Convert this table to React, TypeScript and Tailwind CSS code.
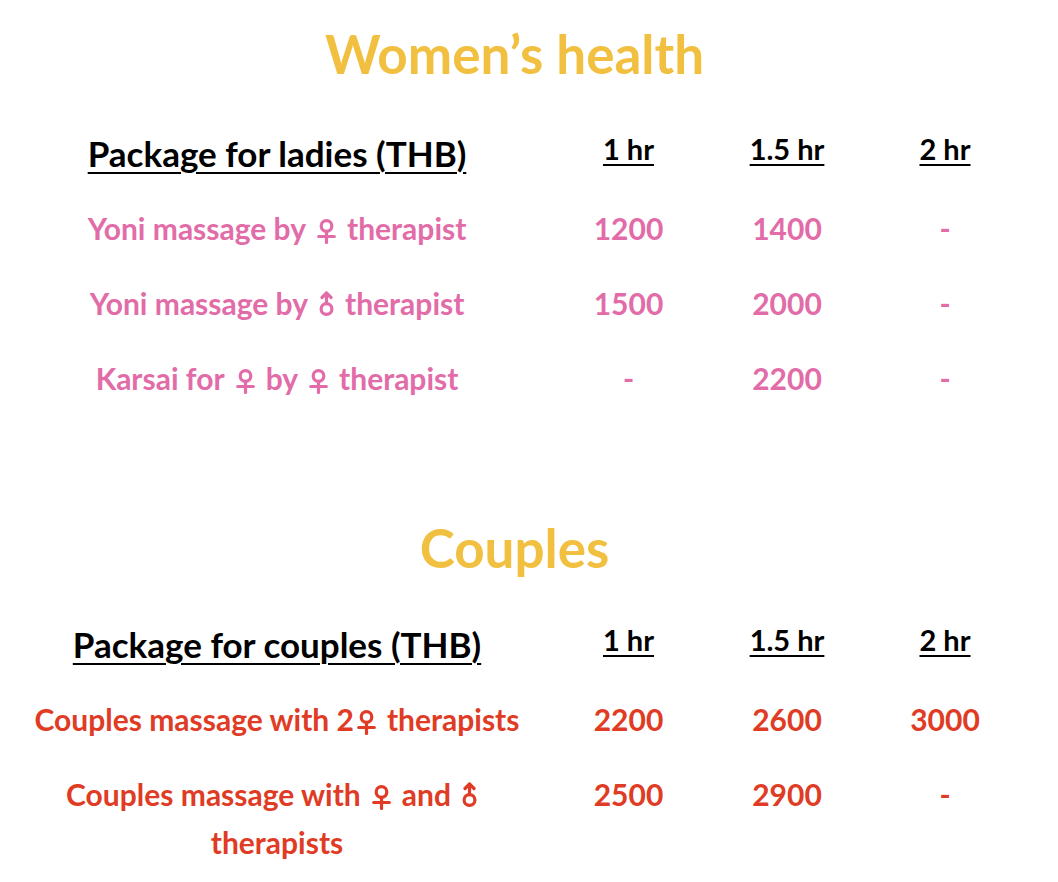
import React from 'react';

function Female({ tight = false }: { tight?: boolean }) {
  return (
    <svg
      viewBox="0 0 19 25"
      width={19}
      height={25}
      className={tight ? 'inline-block w-[19px] h-[25px] align-[-4px] ml-[3px] mr-[11px]' : 'inline-block w-[19px] h-[25px] align-[-4px] mx-[11px]'}
      fill="none"
      stroke="currentColor"
      strokeWidth={3.2}
      strokeLinecap="round"
    >
      <circle cx="9.5" cy="7" r="5.3" />
      <line x1="9.5" y1="12.3" x2="9.5" y2="23.5" />
      <line x1="1.7" y1="17.5" x2="17.3" y2="17.5" />
    </svg>
  );
}

function Male() {
  return (
    <svg
      viewBox="0 0 15 25"
      width={15}
      height={25}
      className="inline-block w-[15px] h-[25px] align-[-1px] mx-[11px]"
      fill="none"
      stroke="currentColor"
      strokeWidth={3.2}
      strokeLinecap="round"
      strokeLinejoin="round"
    >
      <circle cx="7.5" cy="18" r="5.4" />
      <line x1="7.5" y1="12.6" x2="7.5" y2="2" />
      <polyline points="3,6.5 7.5,2 12,6.5" />
    </svg>
  );
}

type Row = { label: React.ReactNode; prices: string[] };

function PriceTable({ heading, rows, color }: { heading: string; rows: Row[]; color: string }) {
  return (
    <div className="mx-[5px]">
      {/* header row */}
      <div className="grid grid-cols-[544px_159px_158px_158px] items-start py-[13.5px]">
        <div className="text-center text-[35px] leading-[48px] text-black underline decoration-2 underline-offset-[5px]">{heading}</div>
        {['1 hr', '1.5 hr', '2 hr'].map((h) => (
          <div key={h} className="text-center text-[29px] leading-[40px] text-black underline decoration-2 underline-offset-[4px]">
            {h}
          </div>
        ))}
      </div>
      {rows.map((r, i) => (
        <div key={i} className={`grid grid-cols-[544px_159px_158px_158px] items-start py-[13.5px] text-[30px] leading-[48px] ${color}`}>
          <div className="text-center px-[20px]">{r.label}</div>
          {r.prices.map((p, j) => (
            <div key={j} className="text-center">{p}</div>
          ))}
        </div>
      ))}
    </div>
  );
}

export default function App() {
  const ladies: Row[] = [
    { label: <>Yoni massage by<Female />therapist</>, prices: ['1200', '1400', '-'] },
    { label: <>Yoni massage by<Male />therapist</>, prices: ['1500', '2000', '-'] },
    { label: <>Karsai for<Female />by<Female />therapist</>, prices: ['-', '2200', '-'] },
  ];
  const couples: Row[] = [
    { label: <>Couples massage with 2<Female tight />therapists</>, prices: ['2200', '2600', '3000'] },
    { label: <>Couples massage with<Female />and<Male />therapists</>, prices: ['2500', '2900', '-'] },
  ];

  return (
    <div className="w-[1029px] bg-white font-['Lato',sans-serif] font-bold pt-[24px] pb-[20px]">
      <h1 className="text-center text-[53px] leading-[60px] text-[#f2c040]">Women’s health</h1>
      <div className="mt-[31px]">
        <PriceTable heading="Package for ladies (THB)" rows={ladies} color="text-[#e26ca8]" />
      </div>

      <h2 className="mt-[103px] text-center text-[53px] leading-[60px] text-[#f2c040]">Couples</h2>
      <div className="mt-[28px]">
        <PriceTable heading="Package for couples (THB)" rows={couples} color="text-[#e03b24]" />
      </div>
    </div>
  );
}
